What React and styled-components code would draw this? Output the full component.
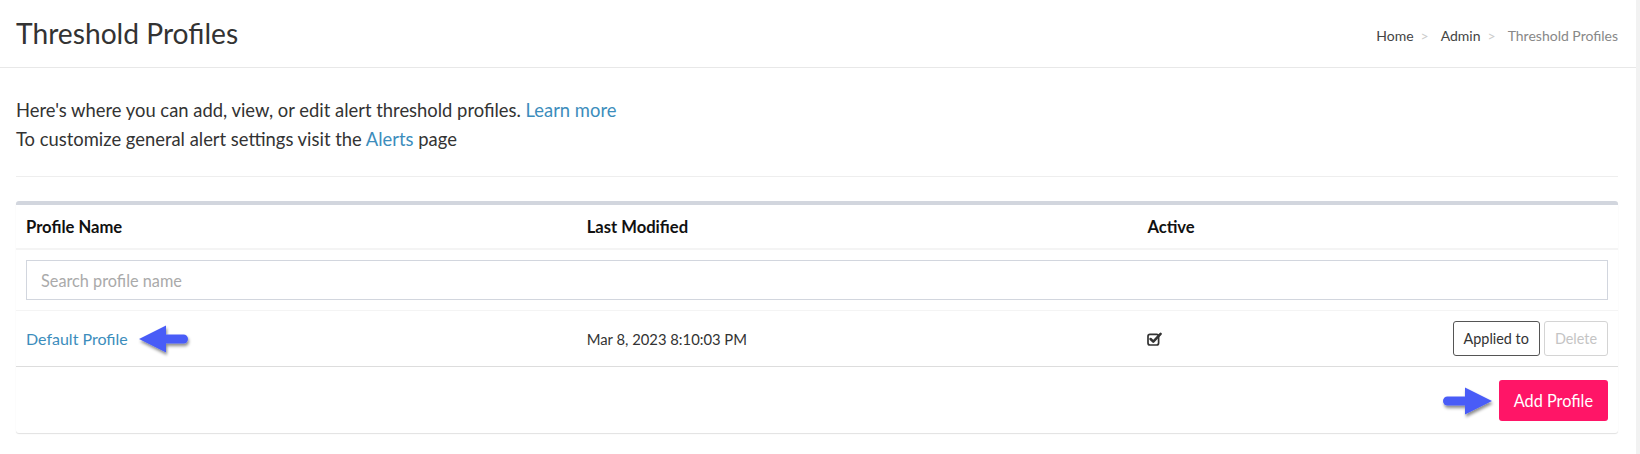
import React from 'react';
import styled, { createGlobalStyle } from 'styled-components';

const GlobalStyle = createGlobalStyle`
  html, body {
    margin: 0;
    padding: 0;
    background: #fff;
  }
  body {
    font-family: Lato, "Liberation Sans", Arial, sans-serif;
    color: #333;
  }
`;

const Shell = styled.div`
  display: flex;
  width: 1640px;
  min-height: 454px;
`;

const Main = styled.div`
  flex: 1;
  min-width: 0;
`;

const RightRail = styled.div`
  width: 4px;
  background: #f2f2f2;
`;

const PageHeader = styled.header`
  height: 67px;
  border-bottom: 1px solid #e8e8e8;
  display: flex;
  align-items: center;
  justify-content: space-between;
  padding: 0 18px 0 16px;
`;

const Title = styled.h1`
  margin: 0 0 2px;
  font-size: 28.2px;
  font-weight: 400;
  color: #333;
`;

const Crumbs = styled.nav`
  display: flex;
  align-items: center;
  font-size: 14px;
  margin-top: 4px;
`;

const Crumb = styled.span`
  color: ${p => (p.$current ? '#888' : '#444')};
`;

const Sep = styled.span`
  color: #ccc;
  margin: 0 12px 0 7px;
`;

const Content = styled.div`
  padding: 28px 18px 0 16px;
`;

const Intro = styled.p`
  margin: 0;
  font-size: 18.4px;
  line-height: 29px;
  color: #333;
`;

const Link = styled.a`
  color: #3c8dbc;
  text-decoration: none;
`;

const Divider = styled.hr`
  margin: 22px 0 24px;
  border: 0;
  border-top: 1px solid #eee;
`;

const Box = styled.section`
  border-top: 4px solid #d2d6de;
  border-radius: 3px;
  background: #fff;
  box-shadow: 0 1px 1px rgba(0, 0, 0, 0.12);
`;

const Table = styled.table`
  width: 100%;
  border-collapse: collapse;
  font-size: 14.8px;
`;

const Th = styled.th`
  width: ${p => p.$w || 'auto'};
  text-align: left;
  font-weight: 700;
  font-size: 16.6px;
  color: #111;
  padding: 12px 10px 11px;
  line-height: 20px;
  border-bottom: 2px solid #f4f4f4;
`;

const Row = styled.tr`
  border-bottom: 1px solid ${p => (p.$strong ? '#ddd' : '#f4f4f4')};
`;

const Td = styled.td`
  padding: ${p => p.$pad || '10px'};
  vertical-align: middle;
  line-height: 20px;
  color: #333;
`;

const Search = styled.input`
  box-sizing: border-box;
  width: 100%;
  height: 40px;
  border: 1px solid #d2d6de;
  padding: 0 14px;
  font-family: inherit;
  font-size: 16.3px;
  color: #333;
  outline: none;
  &::placeholder {
    color: #aaa;
  }
`;

const NameCell = styled.div`
  display: flex;
  align-items: center;
  gap: 10px;
`;

const NameLink = styled(Link)`
  font-size: 16px;
`;

const ActiveCell = styled.div`
  display: flex;
  align-items: center;
  justify-content: space-between;
`;

const Actions = styled.div`
  display: flex;
  gap: 4px;
`;

const SmallButton = styled.button`
  height: 35px;
  padding: 0 10px;
  font-family: inherit;
  font-size: 14.4px;
  background: #fff;
  border-radius: 3px;
  border: 1px solid ${p => (p.disabled ? '#d4d4d4' : '#555')};
  color: ${p => (p.disabled ? '#c4c4c4' : '#333')};
  cursor: ${p => (p.disabled ? 'default' : 'pointer')};
`;

const Footer = styled.div`
  display: flex;
  align-items: center;
  justify-content: flex-end;
  gap: 6px;
  padding: 13px 10px 12px;
`;

const PrimaryButton = styled.button`
  height: 41px;
  padding: 0 15px;
  font-family: inherit;
  font-size: 16.3px;
  color: #fff;
  background: #ff1567;
  border: 0;
  border-radius: 3px;
  cursor: pointer;
`;

const Pointer = ({ dir }) => (
  <svg
    width="52"
    height="30"
    viewBox="0 0 52 30"
    style={{ transform: dir === 'left' ? 'scaleX(-1)' : 'none', overflow: 'visible' }}
  >
    <defs>
      <filter id={`sh-${dir}`} x="-30%" y="-30%" width="160%" height="180%">
        <feDropShadow
          dx={dir === 'left' ? -1 : 1}
          dy="2.5"
          stdDeviation="1.6"
          floodColor="#000"
          floodOpacity="0.45"
        />
      </filter>
    </defs>
    <g filter={`url(#sh-${dir})`} fill="#4a5cf7">
      <rect x="2" y="10.5" width="30" height="9" rx="4.5" />
      <polygon points="24,1.5 51,15 24,28.5" />
    </g>
  </svg>
);

const CheckSquare = () => (
  <svg width="15" height="14" viewBox="0 0 15 14">
    <rect x="1" y="2.4" width="10.6" height="10.6" rx="2" fill="none" stroke="#333" strokeWidth="1.7" />
    <path d="M3.6 7 L6.3 9.7 L13.6 1.8" fill="none" stroke="#333" strokeWidth="2.5" strokeLinecap="round" strokeLinejoin="round" />
  </svg>
);

export default function App() {
  return (
    <>
      <GlobalStyle />
      <Shell>
        <Main>
          <PageHeader>
            <Title>Threshold Profiles</Title>
            <Crumbs>
              <Crumb>Home</Crumb>
              <Sep>&gt;</Sep>
              <Crumb>Admin</Crumb>
              <Sep>&gt;</Sep>
              <Crumb $current>Threshold Profiles</Crumb>
            </Crumbs>
          </PageHeader>
          <Content>
            <Intro>
              Here's where you can add, view, or edit alert threshold profiles.{' '}
              <Link href="#">Learn more</Link>
              <br />
              To customize general alert settings visit the <Link href="#">Alerts</Link> page
            </Intro>
            <Divider />
            <Box>
              <Table>
                <thead>
                  <tr>
                    <Th $w="35%">Profile Name</Th>
                    <Th $w="35%">Last Modified</Th>
                    <Th>Active</Th>
                  </tr>
                </thead>
                <tbody>
                  <Row>
                    <Td colSpan={3} $pad="10px 10px 10px">
                      <Search placeholder="Search profile name" />
                    </Td>
                  </Row>
                  <Row $strong>
                    <Td>
                      <NameCell>
                        <NameLink href="#">Default Profile</NameLink>
                        <Pointer dir="left" />
                      </NameCell>
                    </Td>
                    <Td>Mar 8, 2023 8:10:03 PM</Td>
                    <Td>
                      <ActiveCell>
                        <CheckSquare />
                        <Actions>
                          <SmallButton>Applied to</SmallButton>
                          <SmallButton disabled>Delete</SmallButton>
                        </Actions>
                      </ActiveCell>
                    </Td>
                  </Row>
                </tbody>
              </Table>
              <Footer>
                <Pointer dir="right" />
                <PrimaryButton>Add Profile</PrimaryButton>
              </Footer>
            </Box>
          </Content>
        </Main>
        <RightRail />
      </Shell>
    </>
  );
}
